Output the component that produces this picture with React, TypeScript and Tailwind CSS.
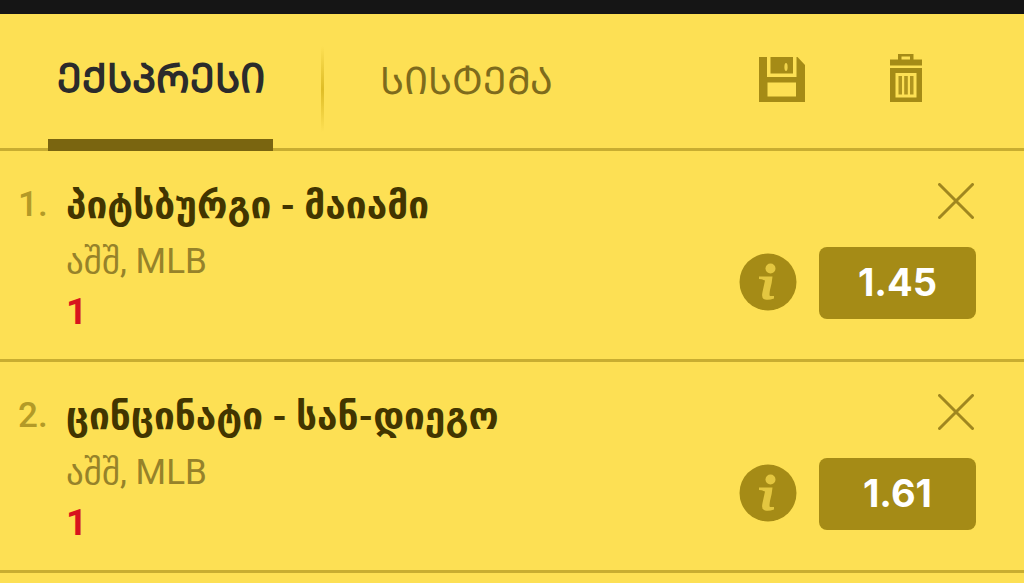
import type { ReactNode } from "react";

type Bet = { id: number; match: string; league: string; pick: string; odds: string };

const bets: Bet[] = [
  { id: 1, match: "პიტსბურგი - მაიამი", league: "აშშ, MLB", pick: "1", odds: "1.45" },
  { id: 2, match: "ცინცინატი - სან-დიეგო", league: "აშშ, MLB", pick: "1", odds: "1.61" },
];

function SaveIcon() {
  return (
    <svg width="46" height="45" viewBox="0 0 46 45" aria-hidden="true">
      <path fill="#a58b16" fillRule="evenodd" d="M0 0H8V20H37.5V0H38.5L46 8V45H0ZM8.5 25.5V39.5H37V25.5Z" />
      <path fill="#a58b16" d="M11.5 0H34V16.5H11.5Z" />
      <ellipse cx="27" cy="10" rx="1.6" ry="4" fill="#f0d34a" />
    </svg>
  );
}

function TrashIcon() {
  return (
    <svg width="32" height="48" viewBox="0 0 32 48" aria-hidden="true">
      <path
        fill="#a58b16"
        fillRule="evenodd"
        d="M8 0H23.5V5.5H32V11.5H0V5.5H8ZM11.5 2.5V5.5H20V2.5ZM0 14H32V48H0ZM5.5 19V43.5H26.5V19Z"
      />
      <path fill="#b0951f" d="M8.5 22H12V40.5H8.5ZM14.2 22H17.8V40.5H14.2ZM20 22H23.5V40.5H20Z" />
    </svg>
  );
}

function CloseIcon() {
  return (
    <svg width="36" height="36" viewBox="0 0 36 36" aria-hidden="true">
      <path d="M1.5 1.5L34.5 34.5M34.5 1.5L1.5 34.5" stroke="#a0871f" strokeWidth="3" strokeLinecap="round" />
    </svg>
  );
}

function InfoIcon() {
  return (
    <svg width="58" height="58" viewBox="0 0 58 58" aria-hidden="true">
      <circle cx="29" cy="29" r="28.5" fill="#a58b16" />
      <circle cx="31.5" cy="15.5" r="5" fill="#e3c640" />
      <path
        d="M20 23.5H33.5Q33 30 31 37Q30 42.5 31 43H35V45.5Q30 47.5 26 46.5Q22 45.5 23.5 39L26 27.5Q23 26 20 26Z"
        fill="#e3c640"
      />
    </svg>
  );
}

function Tab({ active = false, children }: { active?: boolean; children: ReactNode }) {
  return (
    <button
      type="button"
      role="tab"
      aria-selected={active}
      className={
        active
          ? "-mb-[3px] w-[225px] border-b-12 border-[#7a6510] pt-1 text-[40px] font-bold whitespace-nowrap text-[#2b2b2b]"
          : "pt-1 pb-1 text-[38px] whitespace-nowrap text-[#7e6b1c]"
      }
    >
      {children}
    </button>
  );
}

function BetRow({ bet }: { bet: Bet }) {
  return (
    <li className="flex justify-between border-b-3 border-[#c8ad31] pr-12 pb-[22px]">
      <div className="flex">
        <span className="w-[66px] pt-8 pl-[18px] text-[35px] leading-[44px] font-medium text-[#b39a27]">{bet.id}.</span>
        <div className="pt-8">
          <h2 className="text-[37px] leading-[46px] font-bold whitespace-nowrap text-[#423500]">{bet.match}</h2>
          <p className="pt-2 text-[35px] leading-[50px] text-[#96822a]">{bet.league}</p>
          <p className="text-[37px] leading-[50px] font-bold text-[#d7141e]">{bet.pick}</p>
        </div>
      </div>
      <div className="flex flex-col items-end gap-7 pt-8">
        <button type="button" aria-label="წაშლა" className="mr-[2px] block">
          <CloseIcon />
        </button>
        <div className="flex items-center gap-[22px]">
          <button type="button" aria-label="ინფო" className="block pb-[2px]">
            <InfoIcon />
          </button>
          <button
            type="button"
            className="h-[72px] w-[157px] rounded-lg bg-[#a58b16] pb-[2px] font-[Inter,sans-serif] text-[38px] leading-[70px] font-bold text-white"
          >
            {bet.odds}
          </button>
        </div>
      </div>
    </li>
  );
}

export default function App() {
  return (
    <main className="min-h-screen border-t-14 border-[#151515] bg-[#fde054] font-[Roboto,'DejaVu_Sans',sans-serif]">
      <header className="flex h-[137px] justify-between border-b-3 border-[#c8ad31] pr-[102px] pl-12">
        <div role="tablist" className="flex">
          <Tab active>ᲔᲥᲡᲞᲠᲔᲡᲘ</Tab>
          <span className="mt-8 mr-14 mb-4 ml-12 w-[3px] bg-linear-to-b from-transparent via-[#dfbd27] to-transparent" />
          <Tab>ᲡᲘᲡᲢᲔᲛᲐ</Tab>
        </div>
        <div className="flex items-end gap-[85px] pb-[46px]">
          <button type="button" aria-label="შენახვა" className="block">
            <SaveIcon />
          </button>
          <button type="button" aria-label="გასუფთავება" className="block">
            <TrashIcon />
          </button>
        </div>
      </header>
      <ol>
        {bets.map((bet) => (
          <BetRow key={bet.id} bet={bet} />
        ))}
      </ol>
    </main>
  );
}
